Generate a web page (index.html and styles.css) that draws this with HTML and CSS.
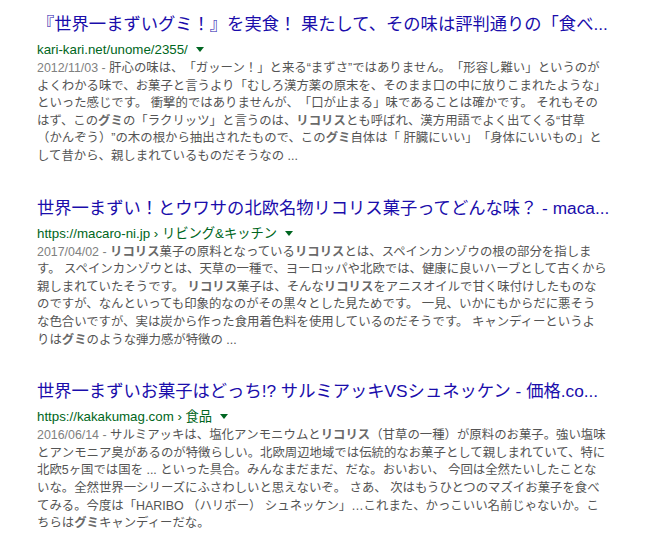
FILE: index.html
```html
<!DOCTYPE html>
<html lang="ja">
<head>
<meta charset="utf-8">
<link rel="stylesheet" href="styles.css">
</head>
<body>
<div class="results">
  <div class="result">
    <h3 class="title">『世界一まずいグミ！』を実食！ 果たして、その味は評判通りの「食べ...</h3>
    <div class="url">kari-kari.net/unome/2355/<span class="arrow"></span></div>
    <div class="snippet"><span class="date">2012/11/03 - </span>肝心の味は、「ガッーン！」と来る“まずさ”ではありません。「形容し難い」というのが<br>よくわかる味で、お菓子と言うより「むしろ漢方薬の原末を、そのまま口の中に放りこまれたような」<br>といった感じです。 衝撃的ではありませんが、「口が止まる」味であることは確かです。 それもその<br>はず、この<b>グミ</b>の「ラクリッツ」と言うのは、<b>リコリス</b>とも呼ばれ、漢方用語でよく出てくる“甘草<br>（かんぞう）”の木の根から抽出されたもので、この<b>グミ</b>自体は「 肝臓にいい」「身体にいいもの」と<br>して昔から、親しまれているものだそうなの ...</div>
  </div>
  <div class="result">
    <h3 class="title">世界一まずい！とウワサの北欧名物リコリス菓子ってどんな味？ - maca...</h3>
    <div class="url">https://macaro-ni.jp › リビング&amp;キッチン<span class="arrow"></span></div>
    <div class="snippet"><span class="date">2017/04/02 - </span><b>リコリス</b>菓子の原料となっている<b>リコリス</b>とは、スペインカンゾウの根の部分を指しま<br>す。 スペインカンゾウとは、天草の一種で、ヨーロッパや北欧では、健康に良いハーブとして古くから<br>親しまれていたそうです。 <b>リコリス</b>菓子は、そんな<b>リコリス</b>をアニスオイルで甘く味付けしたものな<br>のですが、なんといっても印象的なのがその黒々とした見ためです。 一見、いかにもからだに悪そう<br>な色合いですが、実は炭から作った食用着色料を使用しているのだそうです。 キャンディーというよ<br>りは<b>グミ</b>のような弾力感が特徴の ...</div>
  </div>
  <div class="result">
    <h3 class="title">世界一まずいお菓子はどっち!? サルミアッキVSシュネッケン - 価格.co...</h3>
    <div class="url">https://kakakumag.com › 食品<span class="arrow"></span></div>
    <div class="snippet"><span class="date">2016/06/14 - </span>サルミアッキは、塩化アンモニウムと<b>リコリス</b>（甘草の一種）が原料のお菓子。強い塩味<br>とアンモニア臭があるのが特徴らしい。北欧周辺地域では伝統的なお菓子として親しまれていて、特に<br>北欧5ヶ国では国を ... といった具合。みんなまだまだ、だな。おいおい、 今回は全然たいしたことな<br>いな。全然世界一シリーズにふさわしいと思えないぞ。 さあ、 次はもうひとつのマズイお菓子を食べ<br>てみる。今度は「HARIBO （ハリボー） シュネッケン」…これまた、かっこいい名前じゃないか。こ<br>ちらは<b>グミ</b>キャンディーだな。</div>
  </div>
</div>
</body>
</html>
```
FILE: styles.css
```css
html, body {
  margin: 0;
  padding: 0;
  background: #ffffff;
}
body {
  font-family: "Liberation Sans", Arial, "Noto Sans CJK JP", sans-serif;
  text-spacing-trim: space-all;
}
.results {
  padding: 14px 0 0 37px;
  width: 580px;
  display: flex;
  flex-direction: column;
  gap: 32px;
}
.result {
  display: flex;
  flex-direction: column;
}
.title {
  margin: 0;
  font-weight: normal;
  font-size: 17.3px;
  line-height: 21px;
  color: #1a0dab;
  white-space: nowrap;
}
.url {
  margin-top: 4px;
  font-size: 13.3px;
  line-height: 21px;
  color: #006621;
  white-space: nowrap;
}
.arrow {
  display: inline-block;
  margin-left: 8px;
  vertical-align: middle;
  width: 0;
  height: 0;
  border-left: 4px solid transparent;
  border-right: 4px solid transparent;
  border-top: 5px solid #006621;
  position: relative;
  top: -1px;
}
.snippet {
  font-size: 12.4px;
  line-height: 17.6px;
  color: #545454;
  white-space: nowrap;
}
.date {
  color: #808080;
}
.snippet b {
  color: #6a6a6a;
  font-weight: bold;
}
```
